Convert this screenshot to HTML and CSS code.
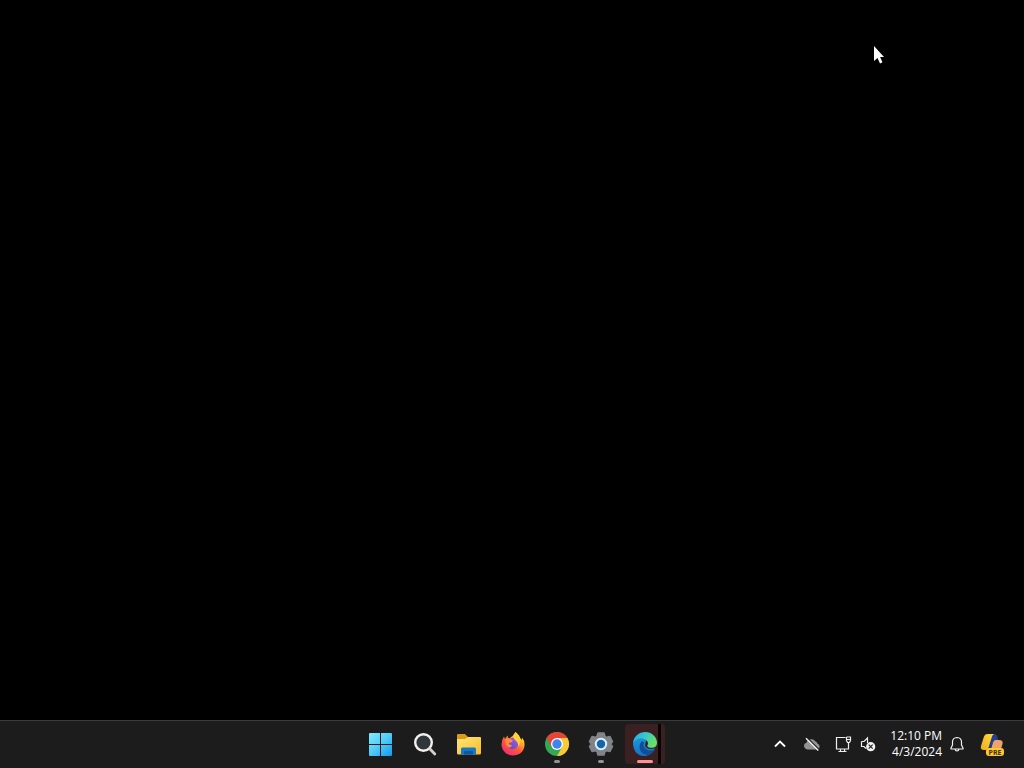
FILE: index.html
```html
<!DOCTYPE html>
<html lang="en">
<head>
<meta charset="utf-8">
<meta name="viewport" content="width=device-width, initial-scale=1">
<title>Desktop</title>
<link rel="stylesheet" href="styles.css">
</head>
<body>
<main class="desktop" aria-label="Desktop">
  <svg class="cursor" width="12" height="18" viewBox="0 0 12 18" aria-hidden="true">
    <path d="M0 0V15L3.5 12L6 17.5L8.5 16.3L6.1 11H10Z" fill="#fff"/>
  </svg>
</main>
<footer class="taskbar">
  <nav class="apps" aria-label="Pinned apps">
    <button class="app" aria-label="Start">
      <svg width="26" height="26" viewBox="0 0 26 26">
        <defs><linearGradient id="win" gradientUnits="userSpaceOnUse" x1="2" y1="1" x2="24" y2="25"><stop stop-color="#83eafd"/><stop offset=".5" stop-color="#4fcbf8"/><stop offset="1" stop-color="#1599ed"/></linearGradient></defs>
        <path fill="url(#win)" d="M2 2H12V13H1V3Q1 2 2 2ZM13 2H23Q24 2 24 3V13H13ZM1 14H12V25H2Q1 25 1 24ZM13 14H24V24Q24 25 23 25H13Z"/>
      </svg>
    </button>
    <button class="app" aria-label="Search">
      <svg width="26" height="26" viewBox="0 0 26 26" fill="none">
        <circle cx="11.5" cy="11.5" r="8.3" fill="#30363a" stroke="#f1f1f1" stroke-width="2.4"/>
        <path d="M18 18L22.8 23" stroke="#d0d0d0" stroke-width="2.8" stroke-linecap="round"/>
      </svg>
    </button>
    <button class="app" aria-label="File Explorer">
      <svg width="26" height="26" viewBox="0 0 26 26">
        <defs><linearGradient id="folder" x1="0" y1="0" x2="1" y2="1"><stop stop-color="#ffe577"/><stop offset="1" stop-color="#f5bd2d"/></linearGradient></defs>
        <path fill="#d89b16" d="M1 4Q1 3 2 3H9L12 6V10H1Z"/>
        <path fill="url(#folder)" d="M1 8H9L12 6H24Q25 6 25 7V22Q25 23.5 23.5 23.5H2.5Q1 23.5 1 22Z"/>
        <path fill="#1678c5" d="M5 23.5V18Q5 16.5 6.5 16.5H18.5Q20 16.5 20 18V23.5Z"/>
        <path fill="#0b589e" d="M9 20H16Q17 20 17 21V23.5H8V21Q8 20 9 20Z"/>
      </svg>
    </button>
    <button class="app" aria-label="Firefox">
      <svg width="26" height="26" viewBox="0 0 26 26">
        <defs><linearGradient id="fox" x1=".85" y1="0" x2=".2" y2=".95"><stop stop-color="#fff145"/><stop offset=".3" stop-color="#ffb52b"/><stop offset=".6" stop-color="#ff5a36"/><stop offset="1" stop-color="#f02b77"/></linearGradient><linearGradient id="globe" x1="1" y1="0" x2="0" y2="1"><stop stop-color="#a958e8"/><stop offset="1" stop-color="#514ac1"/></linearGradient></defs>
        <path fill="url(#fox)" d="M15.5 1Q18 3.5 19.5 6Q21 7.5 21.3 9Q22.2 8 22 6.5Q25 10 24.5 14.5C24 21 19 24.5 13 24.5S1.7 20 1.5 13.5Q1.5 9 4 5.5L5 8L7.5 4.5Q7.7 6.8 9 7.5Q13 5.5 15.5 1Z"/>
        <circle cx="12.5" cy="12.5" r="5.8" fill="url(#globe)"/>
        <path fill="#ff8a38" d="M5 8.5Q9 6 13 9.5L12 11Q9.5 11.5 8.5 12.5Q9.5 14 12 14L11 16Q9.5 17 8 16Q5 14 5 8.5Z"/>
        <path fill="#ffd335" d="M15.5 1Q22 6 20 12L18.5 16Q18.5 11 14 8Q12.8 4.5 15.5 1Z"/>
      </svg>
    </button>
    <button class="app running" aria-label="Google Chrome">
      <svg width="26" height="26" viewBox="0 0 26 26">
        <circle cx="13" cy="13" r="12" fill="#34a853"/>
        <path fill="#ea4335" d="M2.6 7A12 12 0 0 1 23.4 7H13L7.8 16Z"/>
        <path fill="#fbc934" d="M23.4 7A12 12 0 0 1 13 25L18.2 16L13 7Z"/>
        <circle cx="13" cy="13" r="6" fill="#fff"/><circle cx="13" cy="13" r="4.7" fill="#4084ef"/>
      </svg>
    </button>
    <button class="app running" aria-label="Settings">
      <svg width="26" height="26" viewBox="0 0 26 26">
        <path fill="#808488" stroke="#808488" stroke-width="1.5" stroke-linejoin="round" d="M10 2H16L17 5.3L18.8 6.3L22 5.5L24.5 10.5L22.7 13L24.5 15.5L22 20.5L18.8 19.7L17 20.7L16 24H10L9 20.7L7.2 19.7L4 20.5L1.5 15.5L3.3 13L1.5 10.5L4 5.5L7.2 6.3L9 5.3Z"/>
        <circle cx="13" cy="13" r="5.2" fill="#1765a9" stroke="#d9efff" stroke-width="2"/>
      </svg>
    </button>
    <button class="app active" aria-label="Microsoft Edge">
      <svg width="26" height="26" viewBox="0 0 26 26">
        <defs><linearGradient id="edge1" x1="0" y1="0" x2="1" y2=".4"><stop stop-color="#24a8ea"/><stop offset=".5" stop-color="#36c7cf"/><stop offset="1" stop-color="#69df65"/></linearGradient><linearGradient id="edge2" x1="0" y1="0" x2="0" y2="1"><stop stop-color="#1998dc"/><stop offset="1" stop-color="#1670c8"/></linearGradient></defs>
        <path fill="url(#edge2)" d="M1 12C3 6 10 5 14 9L13 15Q15 19 23 17.5C20.5 23 16 25 12 25C5 25 1 19 1 12Z"/>
        <path fill="#124e94" d="M10 10C5 15 8 24 16 24Q20.5 23 23 18Q18 21 14 18Q10 15 12.5 11.5Z"/>
        <path fill="url(#edge1)" d="M1 12C2 5 7 1 13 1C21 1 25 7 25 12C25 16.5 20 18 16 16Q14.7 15.2 15.6 14Q17 11.5 14 9C10 6 4 7 1 12Z"/>
      </svg>
    </button>
  </nav>
  <section class="tray" aria-label="System tray">
    <button class="tray-button" aria-label="Show hidden icons">
      <svg width="16" height="16" viewBox="0 0 16 16" fill="none" stroke="#fff" stroke-width="1.8"><path d="M3 10.5L8 5.5L13 10.5"/></svg>
    </button>
    <button class="tray-button" aria-label="OneDrive, not signed in">
      <svg width="18" height="16" viewBox="0 0 18 16"><path fill="#949494" d="M4 13.5A3.5 3.5 0 0 1 3.5 6.7A5 5 0 0 1 12.5 5.5Q14 6 14.6 7.8A3 3 0 0 1 14.5 13.5Z"/><path d="M4.3 1.8L16 13.5" stroke="#1c1c1c" stroke-width="1.2"/><path d="M3 2.2L15.3 14.5" stroke="#f0f0f0" stroke-width="1.4"/></svg>
    </button>
    <button class="status" aria-label="Network and volume">
      <svg width="18" height="18" viewBox="0 0 18 18" fill="none" stroke="#eee" stroke-width="1.2"><path d="M11.5 2.5H2.5V14H14.5V8M6.5 14V16.5M10.5 14V16.5M4.5 16.5H12.5M12.5 2H16.5V5.5L15.5 7.5H13.5L12.5 5.5V2M12.5 4.5H16.5M14.5 7.5V14"/></svg>
      <svg width="16" height="18" viewBox="0 0 16 18" fill="none"><path d="M1.5 6.5H4L7.5 3V8M1.5 6.5V11.5H4L6 13.5" stroke="#eee" stroke-width="1.2"/><circle cx="10.7" cy="11.7" r="4.6" fill="#f2f2f2"/><path d="M8.7 9.7L12.7 13.7M12.7 9.7L8.7 13.7" stroke="#222" stroke-width="1.2"/></svg>
    </button>
    <button class="clock" aria-label="12:10 PM, 4/3/2024, notifications">
      <span class="time"><span>12:10 PM</span><span>4/3/2024</span></span>
      <svg width="16" height="18" viewBox="0 0 16 18" fill="none" stroke="#f1f1f1" stroke-width="1.2" stroke-linejoin="round"><path d="M8 2.5Q3.5 2.8 3.5 7V10L2 13V14H14V13L12.5 10V7Q12.5 2.8 8 2.5ZM6 14Q6.3 16 8 16Q9.7 16 10 14"/></svg>
    </button>
    <button class="app" aria-label="Copilot preview">
      <svg width="26" height="26" viewBox="0 0 26 26">
        <defs><linearGradient id="pilot" x1="1" y1="0" x2="0" y2="1"><stop stop-color="#ffdc47"/><stop offset="1" stop-color="#efac1b"/></linearGradient></defs>
        <path fill="#253d91" d="M12 3H15Q18 3 18.5 6L19.5 10L14 12L11 18H8Z"/>
        <path fill="url(#pilot)" d="M8.5 3H15Q13.5 3.5 13 5.5L10 15Q9 19 6.5 19H5Q1 19 2 15L4.8 6Q5.8 3 8.5 3Z"/>
        <path fill="#efa36b" d="M16.5 9H20Q24.5 9 23.5 13L22 18H12L14 11.5Q14.8 9 16.5 9Z"/>
        <rect x="7" y="17" width="18" height="8" rx="3" fill="#ffc928"/>
        <text x="16" y="24" text-anchor="middle" class="badge">PRE</text>
      </svg>
    </button>
  </section>
</footer>
</body>
</html>
```
FILE: styles.css
```css
* { box-sizing: border-box; }
body {
  margin: 0;
  min-height: 100vh;
  display: flex;
  flex-direction: column;
  background: #000;
  color: #fff;
  font-family: "Open Sans", "Noto Sans", sans-serif;
}
.desktop { flex: 1; position: relative; }
.cursor { position: absolute; left: 874px; top: 46px; }
.taskbar {
  display: grid;
  grid-template-columns: 1fr auto 1fr;
  align-items: center;
  min-height: 48px;
  padding-bottom: 2px;
  background: #1c1c1c;
  border-top: 1px solid #3b3b3b;
}
button {
  margin: 0;
  padding: 0;
  border: 0;
  background: transparent;
  color: inherit;
  font: inherit;
}
svg { display: block; flex: none; }
.apps { grid-column: 2; display: flex; gap: 4px; padding-left: 2px; }
.app {
  position: relative;
  display: flex;
  align-items: center;
  justify-content: center;
  width: 40px;
  height: 40px;
  border-radius: 4px;
}
.running::after, .active::after {
  content: "";
  position: absolute;
  bottom: 1px;
  left: 50%;
  width: 6px;
  height: 3px;
  margin-left: -3px;
  border-radius: 2px;
  background: #929292;
}
.active {
  background: linear-gradient(to right, #3b2021 33px, #080505 33px, #080505 36px, #3b2021 36px);
}
.active::after {
  width: 16px;
  margin-left: -8px;
  background: #ff9295;
}
.tray {
  display: flex;
  align-items: center;
  justify-content: flex-end;
  padding-right: 12px;
}
.tray-button, .status, .clock {
  display: flex;
  align-items: center;
  justify-content: center;
  height: 40px;
}
.tray-button { width: 32px; }
.status { gap: 8px; padding: 0 6px; }
.clock { gap: 7px; padding: 0 7px 0 8px; }
.time {
  display: flex;
  flex-direction: column;
  text-align: right;
  font-size: 12px;
  line-height: 16px;
  white-space: nowrap;
}
.badge { font: 700 7px "Open Sans", sans-serif; fill: #453207; }
```
